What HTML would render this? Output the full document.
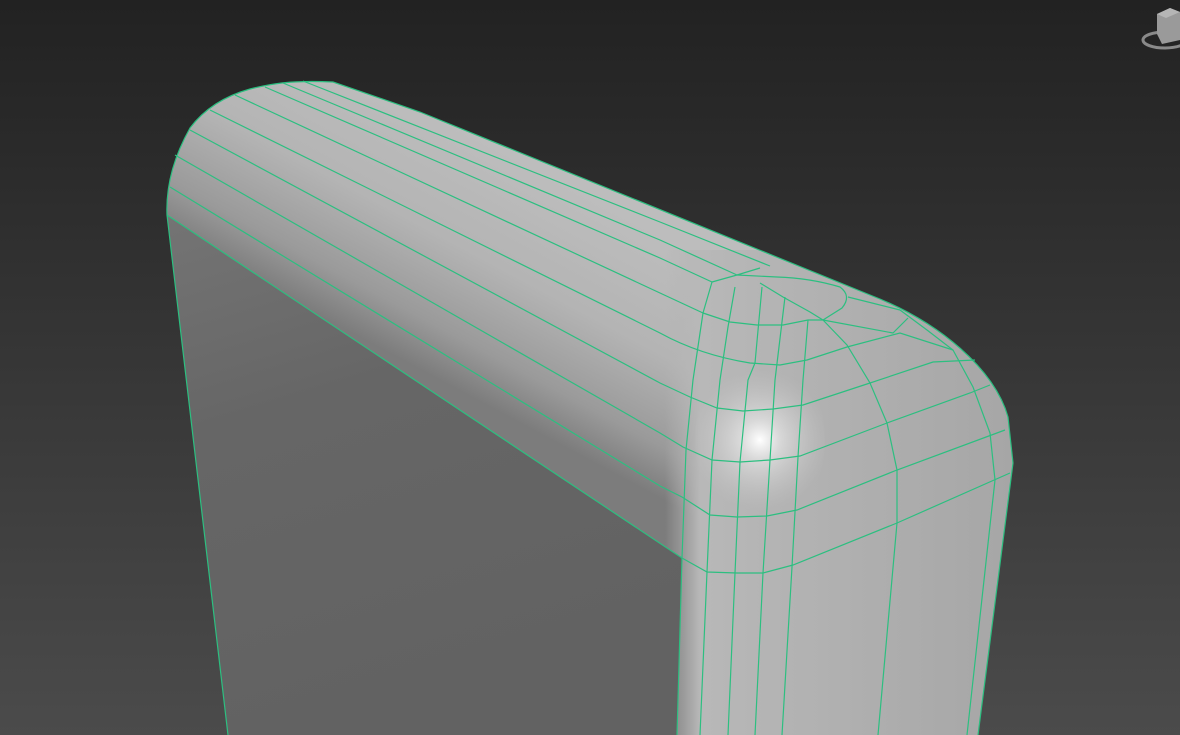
<!DOCTYPE html>
<html><head><meta charset="utf-8"><style>
html,body{margin:0;padding:0;width:1180px;height:735px;overflow:hidden;background:#333}
svg{display:block}
</style></head><body>
<svg width="1180" height="735" viewBox="0 0 1180 735" xmlns="http://www.w3.org/2000/svg">
<defs>
<linearGradient id="bg" x1="0" y1="0" x2="0" y2="1">
<stop offset="0" stop-color="#222"/><stop offset="1" stop-color="#4b4b4b"/></linearGradient>
<linearGradient id="top" gradientUnits="userSpaceOnUse" x1="540" y1="170" x2="430" y2="375">
<stop offset="0" stop-color="#bdbdbd"/><stop offset="0.45" stop-color="#b4b4b4"/><stop offset="0.8" stop-color="#9a9a9a"/><stop offset="1" stop-color="#7c7c7c"/></linearGradient>
<linearGradient id="front" x1="0" y1="0" x2="0.3" y2="1">
<stop offset="0" stop-color="#747474"/><stop offset="0.4" stop-color="#666"/><stop offset="1" stop-color="#626262"/></linearGradient>
<linearGradient id="right" gradientUnits="userSpaceOnUse" x1="665" y1="0" x2="1015" y2="0">
<stop offset="0" stop-color="#b4b4b4" stop-opacity="0"/><stop offset="0.1" stop-color="#b8b8b8" stop-opacity="1"/><stop offset="0.4" stop-color="#b2b2b2"/><stop offset="1" stop-color="#a6a6a6"/></linearGradient>
<radialGradient id="hl" cx="760" cy="440" r="70" gradientUnits="userSpaceOnUse">
<stop offset="0" stop-color="#fff" stop-opacity="1"/><stop offset="0.3" stop-color="#eee" stop-opacity="0.6"/><stop offset="1" stop-color="#ccc" stop-opacity="0"/></radialGradient>
<clipPath id="sil"><path d="M228,735 L167,215 C166,190 172,160 190,128 C205,108 225,96 250,89 C270,84 290,80 333,82 L420,112 L870,295 C940,322 995,370 1008,417 L1013,463 L978,735 Z"/></clipPath>
</defs>
<rect width="1180" height="735" fill="url(#bg)"/>
<!-- silhouette -->
<path d="M228,735 L167,215 C166,190 172,160 190,128 C205,108 225,96 250,89 C270,84 290,80 333,82 L420,112 L870,295 C940,322 995,370 1008,417 L1013,463 L978,735 Z" fill="url(#top)"/>
<rect x="665" y="250" width="360" height="500" fill="url(#right)" clip-path="url(#sil)"/>
<!-- front face -->
<path d="M228,735 L167,215 L682,558 L677,735 Z" fill="url(#front)"/>
<ellipse cx="760" cy="440" rx="65" ry="90" fill="url(#hl)" clip-path="url(#sil)"/>
<g fill="none" stroke="#2cbf80" stroke-width="1.2">
<path d="M228,735 L167,215 C166,190 172,160 190,128 C205,108 225,96 250,89 C270,84 290,80 333,82 L420,112 L870,295 C940,322 995,370 1008,417 L1013,463 L978,735"/>
<path d="M303,81 L660,222 L770,266"/>
<path d="M283,83 L660,240 L737,275"/>
<path d="M265,87 L660,258 L712,282"/>
<path d="M235,95 L660,293 L703,313"/>
<path d="M210,110 L660,333 Q700,355 750,363 L780,365 L807,360 L847,347 L900,333 L953,350"/>
<path d="M190,130 L660,383 L690,397 L717,408 L743,411 L773,409 L803,405 L870,383 L933,362 L975,360"/>
<path d="M175,155 L660,433 L683,447 L712,460 L740,462 L770,460 L800,456 L887,423 L970,393 L990,385"/>
<path d="M170,187 L660,486 L682,497 L710,515 L737,517 L767,516 L797,510 L897,470 L1005,430"/>
<path d="M167,215 L682,558 L707,572 L737,573 L763,573 L793,565 L897,523 L1010,473"/>
<path d="M712,282 L737,275 L760,268"/>
<path d="M760,283 L783,297 L810,312 L823,320"/>
<path d="M777,277 Q810,278 840,287 Q852,296 842,308 L823,320"/>
<path d="M737,275 L777,277"/>
<path d="M703,313 L730,322 L757,325 L783,325 L808,320 L823,320"/>
<path d="M823,320 L893,333 L908,318"/>
<path d="M848,297 L900,310"/>
<path d="M712,282 L703,313 L693,380 L686,450 L682,558 L677,735"/>
<path d="M735,287 L728,327 L720,380 L712,460 L707,572 L700,735"/>
<path d="M762,287 L755,363 L748,380 L740,462 L735,573 L728,735"/>
<path d="M785,297 L775,380 L770,460 L763,573 L755,735"/>
<path d="M808,320 L803,380 L798,457 L792,567 L782,735"/>
<path d="M823,320 L847,345 L870,383 L887,423 L897,470 L897,523 L878,735"/>
<path d="M900,310 L927,330 L953,350 L973,387 L990,433 L995,480 L967,735"/>
</g>
<g>
<ellipse cx="1165" cy="40" rx="22" ry="8" fill="none" stroke="#8a8a8a" stroke-width="3"/>
<path d="M1157,14 L1170,8 L1180,12 L1180,40 L1162,44 L1157,34 Z" fill="#9a9a9a"/>
<path d="M1157,14 L1170,8 L1180,12 L1166,18 Z" fill="#b5b5b5"/>
</g>
</svg>
</body></html>
